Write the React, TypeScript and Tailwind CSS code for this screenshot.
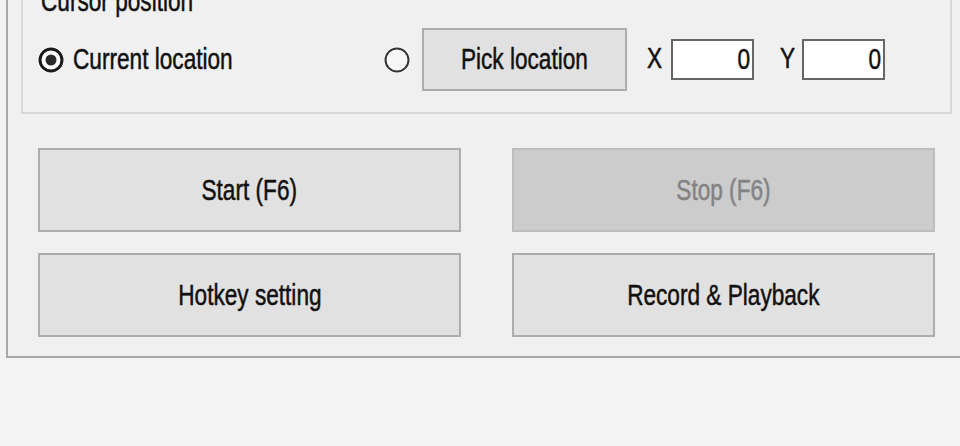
import type { ReactNode } from "react";

const font = { fontFamily: '"Liberation Sans", Arial, sans-serif' };

function Label({ children, className = "" }: { children: ReactNode; className?: string }) {
  // WinForms text looks narrower and heavier than Arial, so squeeze it and thicken a touch
  return (
    <span
      className={`inline-block whitespace-nowrap text-[29px] leading-none scale-x-[0.78] [-webkit-text-stroke:0.5px_currentColor] ${className}`}
    >
      {children}
    </span>
  );
}

function Radio({ checked }: { checked?: boolean }) {
  return (
    <svg width="28" height="28" viewBox="0 0 28 28" className="shrink-0">
      <circle cx="14" cy="14" r="13.5" fill="#ffffff" opacity="0.7" />
      {checked ? (
        <>
          <circle cx="14" cy="14" r="11" fill="#ffffff" stroke="#1a1a1a" strokeWidth="3" />
          <circle cx="14" cy="14" r="5.5" fill="#2a2a2a" />
        </>
      ) : (
        <circle cx="14" cy="14" r="11.5" fill="#f7f7f7" stroke="#333333" strokeWidth="2" />
      )}
    </svg>
  );
}

function Btn({ children, disabled }: { children: ReactNode; disabled?: boolean }) {
  return (
    <div
      className={`flex h-[84px] items-center justify-center border-2 ${
        disabled
          ? "border-[#bdbdbd] bg-[#cccccc] text-[#838383]"
          : "border-[#adadad] bg-[#e1e1e1] text-[#111111]"
      }`}
    >
      <Label className="origin-center">{children}</Label>
    </div>
  );
}

function NumBox() {
  return (
    <div className="flex h-[41px] w-[83px] items-center justify-end border-2 border-[#666666] bg-white pr-[2px] text-[#111111]">
      <Label className="origin-right">0</Label>
    </div>
  );
}

export default function App() {
  return (
    <div className="h-[446px] w-[960px] overflow-hidden bg-[#f3f3f3]" style={font}>
      <div className="ml-[6px] h-[358px] w-[960px] border-b-2 border-l-2 border-[#a8a8a8] bg-[#f0f0f0] pl-[13px]">
        {/* Cursor position group */}
        <div className="flex h-[114px] w-[931px] flex-col border-x-2 border-b-2 border-[#d8d8d8]">
          <div className="-mt-[13px] h-[29px] pl-[18px] text-[#111111]">
            <Label className="origin-left">Cursor position</Label>
          </div>
          <div className="mt-[12px] flex h-[63px] items-center pl-[14px]">
            <div className="flex w-[346px] items-center gap-[8px] text-[#111111]">
              <Radio checked />
              <Label className="origin-left">Current location</Label>
            </div>
            <Radio />
            <div className="ml-[11px] flex h-[63px] w-[205px] items-center justify-center border-2 border-[#adadad] bg-[#e1e1e1] text-[#111111]">
              <Label className="origin-center">Pick location</Label>
            </div>
            <div className="ml-[20px] w-[24px] text-[#111111]">
              <Label className="origin-left">X</Label>
            </div>
            <NumBox />
            <div className="ml-[26px] w-[22px] text-[#111111]">
              <Label className="origin-left">Y</Label>
            </div>
            <NumBox />
          </div>
        </div>

        <div className="ml-[17px] mt-[34px] grid w-[897px] grid-cols-2 gap-x-[51px] gap-y-[21px]">
          <Btn>Start (F6)</Btn>
          <Btn disabled>Stop (F6)</Btn>
          <Btn>Hotkey setting</Btn>
          <Btn>Record &amp; Playback</Btn>
        </div>
      </div>
    </div>
  );
}
